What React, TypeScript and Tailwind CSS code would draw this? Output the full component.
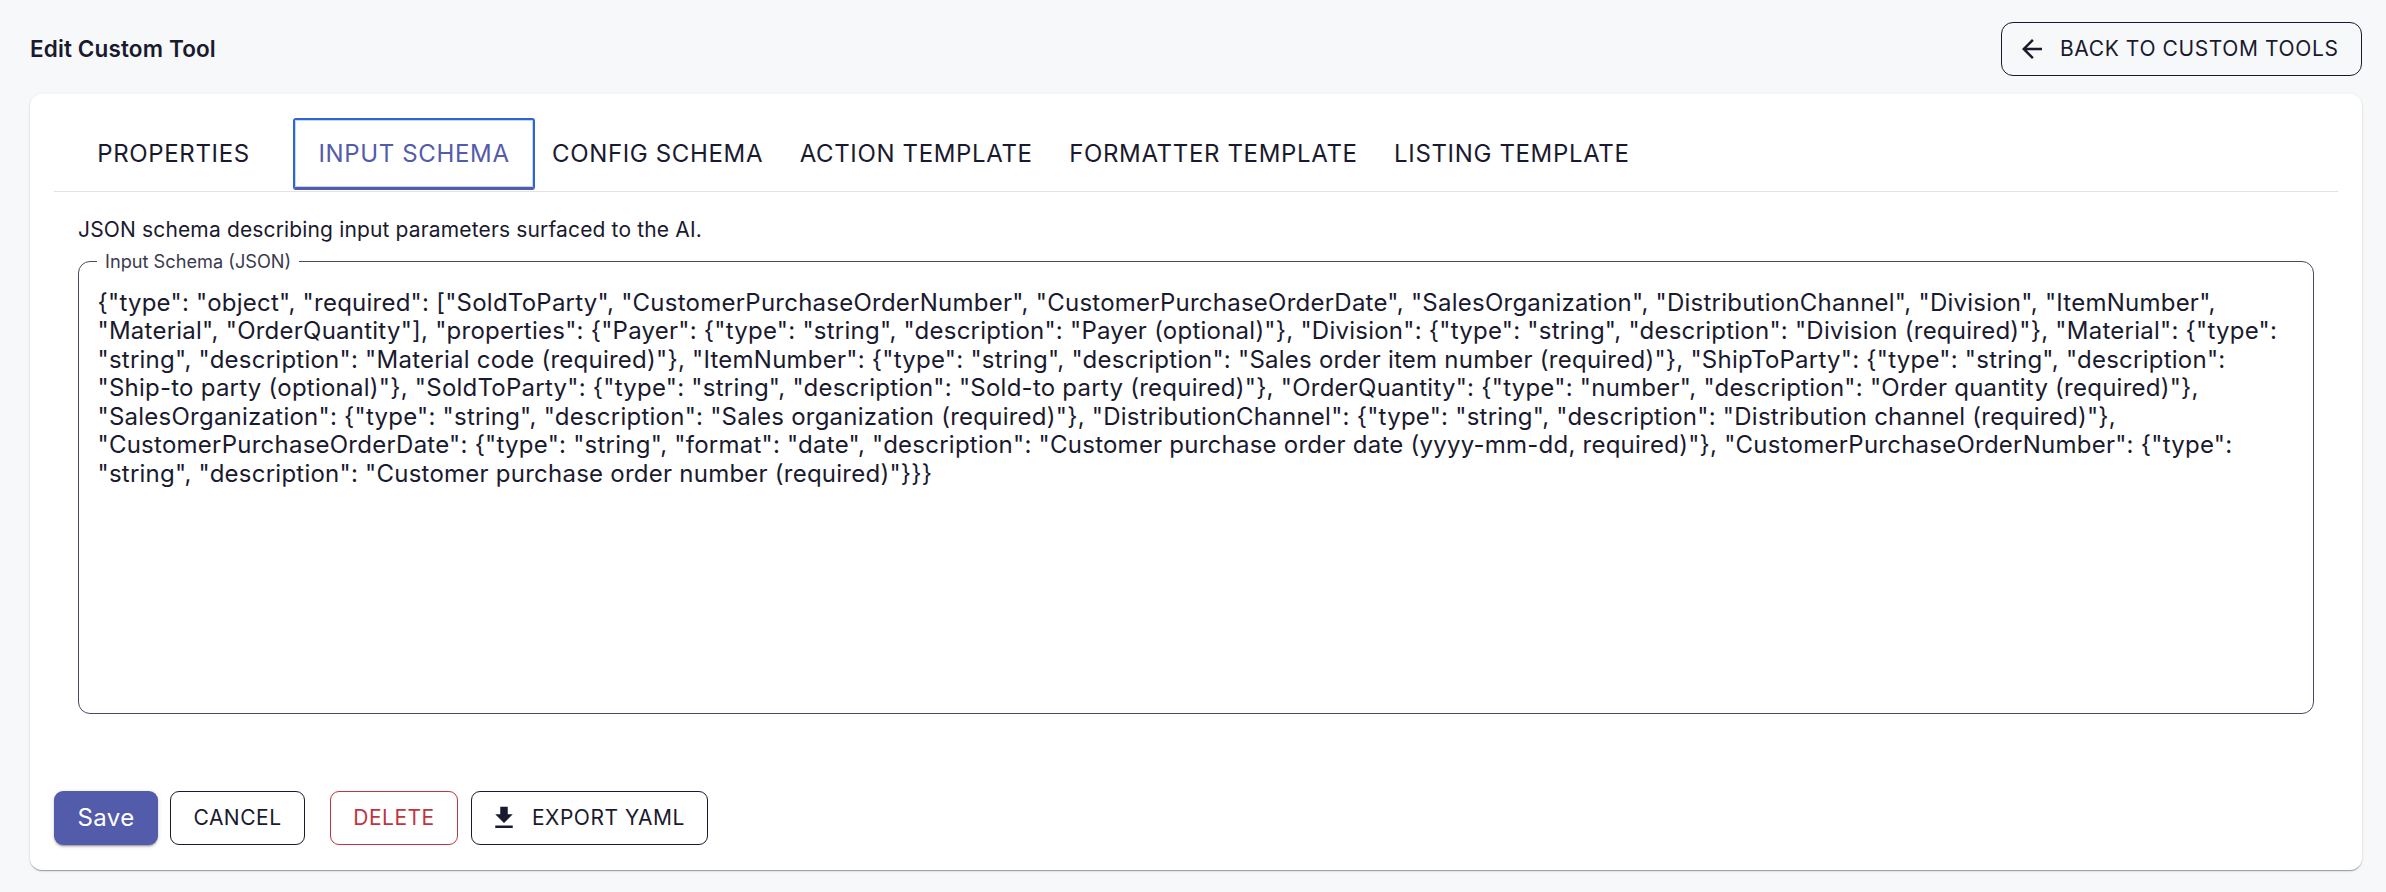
const schema = `{"type": "object", "required": ["SoldToParty", "CustomerPurchaseOrderNumber", "CustomerPurchaseOrderDate", "SalesOrganization", "DistributionChannel", "Division", "ItemNumber", "Material", "OrderQuantity"], "properties": {"Payer": {"type": "string", "description": "Payer (optional)"}, "Division": {"type": "string", "description": "Division (required)"}, "Material": {"type": "string", "description": "Material code (required)"}, "ItemNumber": {"type": "string", "description": "Sales order item number (required)"}, "ShipToParty": {"type": "string", "description": "Ship-to party (optional)"}, "SoldToParty": {"type": "string", "description": "Sold-to party (required)"}, "OrderQuantity": {"type": "number", "description": "Order quantity (required)"}, "SalesOrganization": {"type": "string", "description": "Sales organization (required)"}, "DistributionChannel": {"type": "string", "description": "Distribution channel (required)"}, "CustomerPurchaseOrderDate": {"type": "string", "format": "date", "description": "Customer purchase order date (yyyy-mm-dd, required)"}, "CustomerPurchaseOrderNumber": {"type": "string", "description": "Customer purchase order number (required)"}}}`;

export default function App() {
  return (
    <div className="h-[892px] w-full overflow-hidden bg-[#f7f8fa] pl-[30px] pr-[24px] pt-[22px] font-['Inter',sans-serif] text-[#1a1a2e] [font-optical-sizing:none]">
      <div className="flex h-[54px] items-center justify-between">
        <h1 className="text-[22.5px] font-semibold tracking-[0.14px]">Edit Custom Tool</h1>
        <button className="flex h-[54px] w-[361px] items-center rounded-[12px] border-[1.5px] border-[#1a1a2e] pl-[15px] text-[21px] tracking-[0.6px]">
          <svg viewBox="0 0 24 24" className="h-[30px] w-[30px] fill-current">
            <path d="M20 11H7.83l5.59-5.59L12 4l-8 8 8 8 1.41-1.41L7.83 13H20v-2z" />
          </svg>
          <span className="ml-[13px]">BACK TO CUSTOM TOOLS</span>
        </button>
      </div>

      <div className="mt-[18px] h-[776px] rounded-[12px] bg-white px-[24px] pt-[24px] shadow-[0_2px_1px_-1px_rgba(0,0,0,0.2),0_1px_1px_0_rgba(0,0,0,0.14),0_1px_3px_0_rgba(0,0,0,0.12)]">
        <div className="flex h-[73.5px] items-start border-b-[1.5px] border-[#e2e3e6] text-[24px] tracking-[0.65px]">
          <button className="ml-[20px] mr-[20px] h-[72px] w-[199px]">PROPERTIES</button>
          <button className="h-[72px] w-[242px] rounded-[3px] border-2 border-b-[3px] border-[#2c66cf] border-b-[#535bab] text-[#535bab] shadow-[inset_0_0_0_1px_#c3d3f4]">INPUT SCHEMA</button>
          <button className="h-[72px] pl-[17px] pr-[18.25px]">CONFIG SCHEMA</button>
          <button className="h-[72px] px-[18.25px]">ACTION TEMPLATE</button>
          <button className="h-[72px] px-[18.25px]">FORMATTER TEMPLATE</button>
          <button className="h-[72px] px-[18.25px]">LISTING TEMPLATE</button>
        </div>

        <div className="px-[24px]">
          <p className="mt-[23.5px] text-[21px] leading-[30px] tracking-[0.15px]">JSON schema describing input parameters surfaced to the AI.</p>
          <fieldset className="mt-[6px] h-[462.5px] rounded-[12px] border-[1.5px] border-[#4a4a5e] pl-[18.5px] pr-[16.5px]">
            <legend className="-ml-[0.5px] px-[8px] text-[18.2px] leading-[20px] text-[#3a3a4e]">Input Schema (JSON)</legend>
            <div className="pt-[17.5px] text-[24px] leading-[28.5px] tracking-[0.24px]">{schema}</div>
          </fieldset>
        </div>

        <div className="mt-[77.5px] flex text-[21px] tracking-[0.5px]">
          <button className="h-[54px] w-[104px] rounded-[9px] bg-[#535bab] text-[24px] tracking-[0.4px] text-white shadow-[0_3px_1px_-2px_rgba(0,0,0,0.2),0_2px_2px_0_rgba(0,0,0,0.14),0_1px_5px_0_rgba(0,0,0,0.12)]">Save</button>
          <button className="ml-[12px] h-[54px] w-[135px] rounded-[9px] border-[1.5px] border-[#1a1a2e]">CANCEL</button>
          <button className="ml-[25px] h-[54px] w-[128px] rounded-[9px] border-[1.5px] border-[#c0333f] text-[#c0333f]">DELETE</button>
          <button className="ml-[13px] flex h-[54px] w-[237px] items-center rounded-[9px] border-[1.5px] border-[#1a1a2e] pl-[17px]">
            <svg viewBox="0 0 24 24" className="h-[30px] w-[30px] fill-current">
              <path d="M5 20h14v-2H5v2zM19 9h-4V3H9v6H5l7 7 7-7z" />
            </svg>
            <span className="ml-[13px]">EXPORT YAML</span>
          </button>
        </div>
      </div>
    </div>
  );
}
